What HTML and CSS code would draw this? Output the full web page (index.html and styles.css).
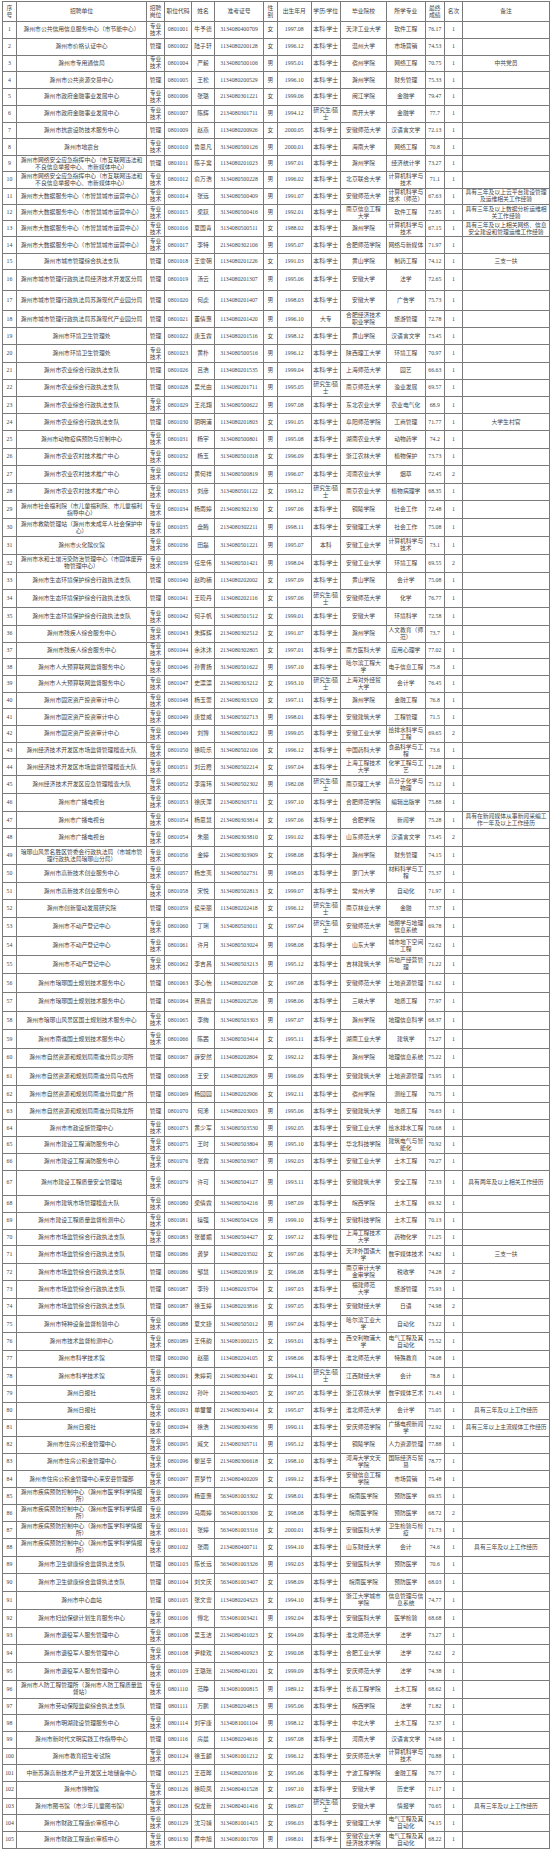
FILE: index.html
```html
<!DOCTYPE html>
<html lang="zh-CN">
<head>
<meta charset="utf-8">
<title>滁州市事业单位招聘拟聘用人员名单</title>
<link rel="stylesheet" href="styles.css">
</head>
<body>
<table class="sheet">
<colgroup>
<col class="c-no"><col class="c-unit"><col class="c-post"><col class="c-code"><col class="c-name"><col class="c-ticket"><col class="c-sex"><col class="c-birth"><col class="c-edu"><col class="c-school"><col class="c-major"><col class="c-score"><col class="c-rank"><col class="c-note">
</colgroup>
<thead>
<tr><th>序号</th><th>招聘单位</th><th>招聘岗位</th><th>职位代码</th><th>姓名</th><th>准考证号</th><th>性别</th><th>出生年月</th><th>学历/学位</th><th>毕业院校</th><th>所学专业</th><th>最终成绩</th><th>名次</th><th>备注</th></tr>
</thead>
<tbody class="g1">
<tr><td>1</td><td>滁州市公共信用信息服务中心（市节能中心）</td><td>专业技术</td><td>0801001</td><td>牛予德</td><td>3134080400709</td><td>女</td><td>1997.08</td><td>本科/学士</td><td>天津工业大学</td><td>软件工程</td><td>76.17</td><td>1</td><td></td></tr>
<tr><td>2</td><td>滁州市价格认证中心</td><td>管理</td><td>0801002</td><td>陆子轩</td><td>1134080200128</td><td>女</td><td>1996.12</td><td>本科/学士</td><td>温州大学</td><td>市场营销</td><td>74.53</td><td>1</td><td></td></tr>
<tr><td>3</td><td>滁州市专用通信局</td><td>专业技术</td><td>0801004</td><td>严毅</td><td>3134080500106</td><td>男</td><td>1995.01</td><td>本科/学士</td><td>宿州学院</td><td>网络工程</td><td>70.75</td><td>1</td><td>中共党员</td></tr>
<tr><td>4</td><td>滁州市公共资源交易中心</td><td>管理</td><td>0801005</td><td>王松</td><td>1134080200529</td><td>男</td><td>1996.10</td><td>本科/学士</td><td>滁州学院</td><td>财务管理</td><td>75.33</td><td>1</td><td></td></tr>
<tr><td>5</td><td>滁州市政府金融事业发展中心</td><td>专业技术</td><td>0801006</td><td>张璐</td><td>2134080301221</td><td>女</td><td>1999.06</td><td>本科/学士</td><td>闽江学院</td><td>金融学</td><td>79.47</td><td>1</td><td></td></tr>
<tr><td>6</td><td>滁州市政府金融事业发展中心</td><td>专业技术</td><td>0801007</td><td>陈辉</td><td>2134080301711</td><td>男</td><td>1994.12</td><td>研究生/硕士</td><td>南开大学</td><td>金融学</td><td>77.7</td><td>1</td><td></td></tr>
<tr><td>7</td><td>滁州市抗震设防技术服务中心</td><td>管理</td><td>0801009</td><td>赵燕</td><td>1134080200926</td><td>女</td><td>2000.05</td><td>本科/学士</td><td>安徽师范大学</td><td>汉语言文学</td><td>72.13</td><td>1</td><td></td></tr>
<tr><td>8</td><td>滁州市地震台</td><td>专业技术</td><td>0801010</td><td>鲁思凡</td><td>3134080500126</td><td>男</td><td>2000.01</td><td>本科/学士</td><td>海南大学</td><td>网络工程</td><td>70.8</td><td>1</td><td></td></tr>
</tbody>
<tbody class="g2">
<tr><td>9</td><td>滁州市网络安全应急指挥中心（市互联网违法和不良信息举报中心、市新媒体中心）</td><td>管理</td><td>0801011</td><td>陈子寓</td><td>1134080201023</td><td>男</td><td>1997.01</td><td>本科/学士</td><td>滁州学院</td><td>经济统计学</td><td>73.27</td><td>1</td><td></td></tr>
<tr><td>10</td><td>滁州市网络安全应急指挥中心（市互联网违法和不良信息举报中心、市新媒体中心）</td><td>专业技术</td><td>0801012</td><td>俞万浩</td><td>3134080500228</td><td>男</td><td>1996.02</td><td>本科/学士</td><td>北京联合大学</td><td>计算机科学与技术</td><td>71.1</td><td>1</td><td></td></tr>
<tr><td>11</td><td>滁州市大数据服务中心（市智慧城市运营中心）</td><td>专业技术</td><td>0801014</td><td>张远</td><td>3134080500409</td><td>男</td><td>1991.07</td><td>本科/学士</td><td>安徽师范大学</td><td>计算机科学与技术（师范）</td><td>67.63</td><td>1</td><td>具有三年及以上云平台建设管理及运维相关工作经验</td></tr>
<tr><td>12</td><td>滁州市大数据服务中心（市智慧城市运营中心）</td><td>专业技术</td><td>0801015</td><td>梁跃</td><td>3134080500416</td><td>男</td><td>1992.01</td><td>本科/学士</td><td>南京信息工程大学</td><td>软件工程</td><td>72.85</td><td>1</td><td>具有三年及以上数据分析运维相关工作经验</td></tr>
<tr><td>13</td><td>滁州市大数据服务中心（市智慧城市运营中心）</td><td>专业技术</td><td>0801016</td><td>夏国青</td><td>3134080500511</td><td>女</td><td>1988.02</td><td>本科/学士</td><td>滁州学院</td><td>计算机科学与技术</td><td>67.15</td><td>1</td><td>具有三年及以上相关网络、信息安全建设和管理运维工作经验</td></tr>
<tr><td>14</td><td>滁州市大数据服务中心（市智慧城市运营中心）</td><td>专业技术</td><td>0801017</td><td>李特</td><td>2134080302106</td><td>男</td><td>1995.07</td><td>本科/学士</td><td>合肥师范学院</td><td>网络与新媒体</td><td>71.97</td><td>1</td><td></td></tr>
<tr><td>15</td><td>滁州市城市管理综合执法支队</td><td>管理</td><td>0801018</td><td>王雯朝</td><td>1134080201226</td><td>女</td><td>1991.03</td><td>本科/学士</td><td>黄山学院</td><td>制药工程</td><td>74.12</td><td>1</td><td>三支一扶</td></tr>
<tr class="tall"><td>16</td><td>滁州市城市管理行政执法局经济技术开发区分局</td><td>管理</td><td>0801019</td><td>汤云</td><td>1134080201307</td><td>男</td><td>1995.06</td><td>本科/学士</td><td>安徽大学</td><td>法学</td><td>72.65</td><td>1</td><td></td></tr>
<tr class="tall"><td>17</td><td>滁州市城市管理行政执法局苏滁现代产业园分局</td><td>管理</td><td>0801020</td><td>何虎</td><td>1134080201407</td><td>男</td><td>1998.03</td><td>本科/学士</td><td>安徽大学</td><td>广告学</td><td>75.73</td><td>1</td><td></td></tr>
</tbody>
<tbody class="g3">
<tr><td>18</td><td>滁州市城市管理行政执法局苏滁现代产业园分局</td><td>管理</td><td>0801021</td><td>董倩惠</td><td>1134080201420</td><td>男</td><td>1996.10</td><td>大专</td><td>合肥经济技术职业学院</td><td>旅游管理</td><td>72.78</td><td>1</td><td></td></tr>
<tr><td>19</td><td>滁州市环境卫生管理处</td><td>管理</td><td>0801022</td><td>唐玉霖</td><td>1134080201516</td><td>女</td><td>1998.12</td><td>本科/学士</td><td>黄山学院</td><td>汉语言文学</td><td>73.45</td><td>1</td><td></td></tr>
<tr><td>20</td><td>滁州市环境卫生管理处</td><td>专业技术</td><td>0801023</td><td>黄朴</td><td>3134080500516</td><td>男</td><td>1996.12</td><td>本科/学士</td><td>陕西理工大学</td><td>环境工程</td><td>70.97</td><td>1</td><td></td></tr>
<tr><td>21</td><td>滁州市农业综合行政执法支队</td><td>管理</td><td>0801026</td><td>吕浩</td><td>1134080201535</td><td>男</td><td>1999.04</td><td>本科/学士</td><td>上海师范大学</td><td>园艺</td><td>66.63</td><td>1</td><td></td></tr>
<tr><td>22</td><td>滁州市农业综合行政执法支队</td><td>管理</td><td>0801028</td><td>吴光由</td><td>1134080201711</td><td>男</td><td>1995.05</td><td>研究生/硕士</td><td>南京师范大学</td><td>渔业发展</td><td>69.57</td><td>1</td><td></td></tr>
<tr><td>23</td><td>滁州市农业综合行政执法支队</td><td>专业技术</td><td>0801029</td><td>王兆翔</td><td>3134080500622</td><td>男</td><td>1997.08</td><td>本科/学士</td><td>东北农业大学</td><td>农业电气化</td><td>68.9</td><td>1</td><td></td></tr>
<tr><td>24</td><td>滁州市农业综合行政执法支队</td><td>管理</td><td>0801030</td><td>阴明浦</td><td>1134080201803</td><td>女</td><td>1991.05</td><td>本科/学士</td><td>阜阳师范学院</td><td>工商管理</td><td>71.77</td><td>1</td><td>大学生村官</td></tr>
<tr><td>25</td><td>滁州市动物疫病预防与控制中心</td><td>专业技术</td><td>0801031</td><td>杨宇</td><td>3134080500801</td><td>男</td><td>1995.08</td><td>本科/学士</td><td>湖南农业大学</td><td>动物药学</td><td>74.2</td><td>1</td><td></td></tr>
<tr><td>26</td><td>滁州市农业农村技术推广中心</td><td>专业技术</td><td>0801032</td><td>杨玉</td><td>3134080501018</td><td>女</td><td>1996.09</td><td>本科/学士</td><td>浙江农林大学</td><td>植物保护</td><td>73.73</td><td>1</td><td></td></tr>
</tbody>
<tbody class="g4">
<tr><td>27</td><td>滁州市农业农村技术推广中心</td><td>专业技术</td><td>0801032</td><td>黄何祥</td><td>3134080500819</td><td>男</td><td>1996.07</td><td>本科/学士</td><td>河南农业大学</td><td>烟草</td><td>72.45</td><td>2</td><td></td></tr>
<tr><td>28</td><td>滁州市农业农村技术推广中心</td><td>专业技术</td><td>0801033</td><td>刘彦</td><td>3134080501122</td><td>女</td><td>1993.12</td><td>研究生/硕士</td><td>南京农业大学</td><td>植物病理学</td><td>68.35</td><td>1</td><td></td></tr>
<tr><td>29</td><td>滁州市社会福利院（市儿童福利院、市儿童福利指导中心）</td><td>专业技术</td><td>0801034</td><td>杨雨婷</td><td>2134080302130</td><td>女</td><td>1997.06</td><td>本科/学士</td><td>铜陵学院</td><td>社会工作</td><td>72.48</td><td>1</td><td></td></tr>
<tr><td>30</td><td>滁州市救助管理站（滁州市未成年人社会保护中心）</td><td>专业技术</td><td>0801035</td><td>盘腾</td><td>2134080302211</td><td>男</td><td>1998.11</td><td>本科/学士</td><td>安徽理工大学</td><td>社会工作</td><td>75.08</td><td>1</td><td></td></tr>
<tr><td>31</td><td>滁州市火化殡仪馆</td><td>专业技术</td><td>0801036</td><td>田磊</td><td>3134080501221</td><td>男</td><td>1995.07</td><td>本科</td><td>安徽工业大学</td><td>计算机科学与技术</td><td>73.1</td><td>1</td><td></td></tr>
<tr><td>32</td><td>滁州市水和土壤污染防治管理中心（市固体废弃物管理中心）</td><td>专业技术</td><td>0801039</td><td>任忠伟</td><td>3134080501421</td><td>男</td><td>1998.04</td><td>本科/学士</td><td>安徽工业大学</td><td>环境工程</td><td>69.55</td><td>2</td><td></td></tr>
<tr><td>33</td><td>滁州市生态环境保护综合行政执法支队</td><td>管理</td><td>0801040</td><td>赵昀楠</td><td>1134080202002</td><td>女</td><td>1997.09</td><td>本科/学士</td><td>黄山学院</td><td>会计学</td><td>75.08</td><td>1</td><td></td></tr>
<tr><td>34</td><td>滁州市生态环境保护综合行政执法支队</td><td>管理</td><td>0801041</td><td>王晓丹</td><td>1134080202116</td><td>女</td><td>1997.06</td><td>研究生/硕士</td><td>安徽师范大学</td><td>化学</td><td>76.77</td><td>1</td><td></td></tr>
<tr><td>35</td><td>滁州市生态环境保护综合行政执法支队</td><td>专业技术</td><td>0801042</td><td>何子帆</td><td>3134080501512</td><td>女</td><td>1999.01</td><td>本科/学士</td><td>安徽大学</td><td>环境科学</td><td>72.58</td><td>1</td><td></td></tr>
</tbody>
<tbody class="g5">
<tr><td>36</td><td>滁州市残疾人综合服务中心</td><td>专业技术</td><td>0801043</td><td>朱辉辉</td><td>2134080302512</td><td>女</td><td>1991.07</td><td>本科/学士</td><td>滁州学院</td><td>人文教育（师范）</td><td>73.7</td><td>1</td><td></td></tr>
<tr><td>37</td><td>滁州市残疾人综合服务中心</td><td>专业技术</td><td>0801044</td><td>余沐沐</td><td>2134080302805</td><td>女</td><td>1997.01</td><td>本科/学士</td><td>南方医科大学</td><td>应用心理学</td><td>77.02</td><td>1</td><td></td></tr>
<tr><td>38</td><td>滁州市人大预算联网监督服务中心</td><td>专业技术</td><td>0801046</td><td>孙曹扬</td><td>3134080501622</td><td>男</td><td>1997.10</td><td>本科/学士</td><td>哈尔滨工程大学</td><td>电子信息工程</td><td>75.8</td><td>1</td><td></td></tr>
<tr><td>39</td><td>滁州市人大预算联网监督服务中心</td><td>专业技术</td><td>0801047</td><td>史漂漂</td><td>2134080303212</td><td>女</td><td>1993.10</td><td>研究生/硕士</td><td>上海对外经贸大学</td><td>会计学</td><td>76.45</td><td>1</td><td></td></tr>
<tr><td>40</td><td>滁州市固定资产投资审计中心</td><td>专业技术</td><td>0801048</td><td>杨玉蕾</td><td>2134080303320</td><td>女</td><td>1997.11</td><td>本科/学士</td><td>滁州学院</td><td>金融工程</td><td>76.8</td><td>1</td><td></td></tr>
<tr><td>41</td><td>滁州市固定资产投资审计中心</td><td>专业技术</td><td>0801049</td><td>唐世威</td><td>3134080502713</td><td>男</td><td>1998.01</td><td>本科/学士</td><td>安徽建筑大学</td><td>工程管理</td><td>71.5</td><td>1</td><td></td></tr>
<tr><td>42</td><td>滁州市固定资产投资审计中心</td><td>专业技术</td><td>0801049</td><td>刘博</td><td>3134080501822</td><td>男</td><td>1999.05</td><td>本科/学士</td><td>安徽工业大学</td><td>给排水科学与工程</td><td>69.65</td><td>2</td><td></td></tr>
<tr><td>43</td><td>滁州经济技术开发区市场监督管理稽查大队</td><td>专业技术</td><td>0801050</td><td>徐晓乐</td><td>3134080502106</td><td>女</td><td>1996.12</td><td>本科/学士</td><td>中国药科大学</td><td>食品科学与工程</td><td>73.6</td><td>1</td><td></td></tr>
<tr><td>44</td><td>滁州经济技术开发区市场监督管理稽查大队</td><td>专业技术</td><td>0801051</td><td>刘云霞</td><td>3134080502214</td><td>女</td><td>1997.04</td><td>本科/学士</td><td>上海工程技术大学</td><td>化学工程与工艺</td><td>71.28</td><td>1</td><td></td></tr>
</tbody>
<tbody class="g6">
<tr><td>45</td><td>滁州经济技术开发区应急管理稽查大队</td><td>专业技术</td><td>0801052</td><td>李露玮</td><td>3134080502302</td><td>男</td><td>1982.08</td><td>研究生/硕士</td><td>南京理工大学</td><td>高分子化学与物理</td><td>75.12</td><td>1</td><td></td></tr>
<tr><td>46</td><td>滁州市广播电视台</td><td>专业技术</td><td>0801053</td><td>徐庆萍</td><td>2134080303711</td><td>女</td><td>1997.10</td><td>本科/学士</td><td>合肥师范学院</td><td>编辑出版学</td><td>75.88</td><td>1</td><td></td></tr>
<tr><td>47</td><td>滁州市广播电视台</td><td>专业技术</td><td>0801054</td><td>杨思慧</td><td>2134080303814</td><td>女</td><td>1997.06</td><td>本科/学士</td><td>合肥学院</td><td>新闻学</td><td>75.28</td><td>1</td><td>具有在新闻媒体从事新闻采编工作一年及以上工作经历</td></tr>
<tr><td>48</td><td>滁州市广播电视台</td><td>专业技术</td><td>0801054</td><td>朱丽</td><td>2134080303810</td><td>女</td><td>1991.02</td><td>本科/学士</td><td>山东师范大学</td><td>汉语言文学</td><td>73.45</td><td>2</td><td></td></tr>
<tr><td>49</td><td>琅琊山风景名胜区管委会行政执法局（市城市管理行政执法局琅琊山分局）</td><td>专业技术</td><td>0801056</td><td>金婷</td><td>2134080303909</td><td>女</td><td>1998.08</td><td>本科/学士</td><td>滁州学院</td><td>财务管理</td><td>74.15</td><td>1</td><td></td></tr>
<tr><td>50</td><td>滁州市高新技术创业服务中心</td><td>专业技术</td><td>0801057</td><td>杨志夷</td><td>3134080502731</td><td>男</td><td>1998.03</td><td>本科/学士</td><td>厦门大学</td><td>材料科学与工程</td><td>75.37</td><td>1</td><td></td></tr>
<tr><td>51</td><td>滁州市高新技术创业服务中心</td><td>专业技术</td><td>0801058</td><td>宋悦</td><td>3134080502813</td><td>女</td><td>1999.07</td><td>本科/学士</td><td>常州大学</td><td>自动化</td><td>71.97</td><td>1</td><td></td></tr>
<tr><td>52</td><td>滁州市创新驱动发展研究院</td><td>管理</td><td>0801059</td><td>侯荣丽</td><td>1134080202418</td><td>女</td><td>1996.12</td><td>研究生/硕士</td><td>南京林业大学</td><td>金融</td><td>77.37</td><td>1</td><td></td></tr>
</tbody>
<tbody class="g7">
<tr><td>53</td><td>滁州市不动产登记中心</td><td>专业技术</td><td>0801060</td><td>丁琍</td><td>3134080503011</td><td>女</td><td>1997.04</td><td>研究生/硕士</td><td>安徽师范大学</td><td>地图学与地理信息系统</td><td>69.78</td><td>1</td><td></td></tr>
<tr><td>54</td><td>滁州市不动产登记中心</td><td>专业技术</td><td>0801061</td><td>许月</td><td>3134080503024</td><td>男</td><td>1998.08</td><td>本科/学士</td><td>山东大学</td><td>城市地下空间工程</td><td>72.62</td><td>1</td><td></td></tr>
<tr><td>55</td><td>滁州市不动产登记中心</td><td>专业技术</td><td>0801062</td><td>李吉昌</td><td>3134080503213</td><td>男</td><td>1995.12</td><td>本科/学士</td><td>吉林建筑大学</td><td>房地产经营管理</td><td>71.22</td><td>1</td><td></td></tr>
<tr><td>56</td><td>滁州市琅琊国土规划技术服务中心</td><td>管理</td><td>0801063</td><td>李心怡</td><td>1134080202508</td><td>女</td><td>1997.08</td><td>本科/学士</td><td>安徽师范大学</td><td>土地资源管理</td><td>71.62</td><td>1</td><td></td></tr>
<tr><td>57</td><td>滁州市琅琊国土规划技术服务中心</td><td>管理</td><td>0801064</td><td>贺昌雷</td><td>1134080202526</td><td>男</td><td>1998.06</td><td>本科/学士</td><td>三峡大学</td><td>地质工程</td><td>77.97</td><td>1</td><td></td></tr>
<tr><td>58</td><td>滁州市琅琊山风景区国土规划技术服务中心</td><td>专业技术</td><td>0801065</td><td>李絢</td><td>3134080503303</td><td>男</td><td>1997.07</td><td>本科/学士</td><td>滁州学院</td><td>地理信息科学</td><td>68.37</td><td>1</td><td></td></tr>
<tr><td>59</td><td>滁州市南谯国土规划技术服务中心</td><td>专业技术</td><td>0801066</td><td>陈茜</td><td>3134080503414</td><td>女</td><td>1995.11</td><td>本科/学士</td><td>湖南工业大学</td><td>建筑学</td><td>73.27</td><td>1</td><td></td></tr>
<tr><td>60</td><td>滁州市自然资源和规划局南谯分局沙河所</td><td>管理</td><td>0801067</td><td>薛安然</td><td>1134080202804</td><td>女</td><td>1992.12</td><td>本科/学士</td><td>滁州学院</td><td>地理信息系统</td><td>75.22</td><td>1</td><td></td></tr>
<tr><td>61</td><td>滁州市自然资源和规划局南谯分局乌衣所</td><td>管理</td><td>0801068</td><td>王安</td><td>1134080202809</td><td>男</td><td>1996.09</td><td>本科/学士</td><td>安徽建筑大学</td><td>土地资源管理</td><td>73.95</td><td>1</td><td></td></tr>
</tbody>
<tbody class="g8">
<tr><td>62</td><td>滁州市自然资源和规划局南谯分局章广所</td><td>管理</td><td>0801069</td><td>杨园园</td><td>1134080202906</td><td>女</td><td>1992.11</td><td>本科/学士</td><td>宿州学院</td><td>测绘工程</td><td>70.75</td><td>1</td><td></td></tr>
<tr><td>63</td><td>滁州市自然资源和规划局南谯分局珠龙所</td><td>管理</td><td>0801070</td><td>何浠</td><td>1134080203003</td><td>男</td><td>1995.06</td><td>本科/学士</td><td>安徽建筑大学</td><td>地质工程</td><td>76.63</td><td>1</td><td></td></tr>
<tr><td>64</td><td>滁州市市政设施管理中心</td><td>专业技术</td><td>0801073</td><td>黄少军</td><td>3134080503530</td><td>男</td><td>1992.05</td><td>本科/学士</td><td>安徽工业大学</td><td>给水排水工程</td><td>70.68</td><td>1</td><td></td></tr>
<tr><td>65</td><td>滁州市建设工程消防服务中心</td><td>专业技术</td><td>0801075</td><td>王时</td><td>3134080503804</td><td>男</td><td>1995.10</td><td>本科/学士</td><td>华北科技学院</td><td>建筑电气与智能化</td><td>70.92</td><td>1</td><td></td></tr>
<tr><td>66</td><td>滁州市建设工程消防服务中心</td><td>专业技术</td><td>0801076</td><td>张霖</td><td>3134080503907</td><td>男</td><td>1992.03</td><td>本科/学士</td><td>安徽工业大学</td><td>土木工程</td><td>70.27</td><td>1</td><td></td></tr>
<tr class="taller"><td>67</td><td>滁州市建设工程质量安全管理站</td><td>专业技术</td><td>0801079</td><td>许可</td><td>3134080504127</td><td>男</td><td>1993.11</td><td>本科/学士</td><td>安徽建筑大学</td><td>安全工程</td><td>72.33</td><td>1</td><td>具有两年及以上相关工作经历</td></tr>
<tr><td>68</td><td>滁州市建筑市场管理稽查大队</td><td>专业技术</td><td>0801080</td><td>梁倩霖</td><td>3134080504216</td><td>男</td><td>1987.09</td><td>本科/学士</td><td>皖西学院</td><td>土木工程</td><td>69.32</td><td>1</td><td></td></tr>
<tr><td>69</td><td>滁州市建设工程质量监督检测中心</td><td>专业技术</td><td>0801081</td><td>操强</td><td>3134080504326</td><td>男</td><td>1999.10</td><td>本科/学士</td><td>安徽科技学院</td><td>土木工程</td><td>70.13</td><td>1</td><td></td></tr>
<tr><td>70</td><td>滁州市市场监管综合行政执法支队</td><td>专业技术</td><td>0801083</td><td>张馨媚</td><td>3134080504427</td><td>女</td><td>1997.12</td><td>本科/学位</td><td>上海工程技术大学</td><td>药物化学</td><td>71.25</td><td>1</td><td></td></tr>
</tbody>
<tbody class="g9">
<tr><td>71</td><td>滁州市市场监管综合行政执法支队</td><td>管理</td><td>0801086</td><td>龚梦</td><td>1134080203502</td><td>女</td><td>1997.06</td><td>本科/学士</td><td>天津外国语大学</td><td>数字媒体技术</td><td>74.82</td><td>1</td><td>三支一扶</td></tr>
<tr><td>72</td><td>滁州市市场监管综合行政执法支队</td><td>管理</td><td>0801086</td><td>邹慧</td><td>1134080203819</td><td>女</td><td>1996.08</td><td>本科/学士</td><td>南京审计大学金审学院</td><td>税收学</td><td>74.28</td><td>2</td><td></td></tr>
<tr><td>73</td><td>滁州市市场监管综合行政执法支队</td><td>管理</td><td>0801087</td><td>李玲</td><td>1134080203704</td><td>女</td><td>1997.03</td><td>本科/学士</td><td>福建师范<br>大学</td><td>旅游管理</td><td>75.93</td><td>1</td><td></td></tr>
<tr><td>74</td><td>滁州市市场监管综合行政执法支队</td><td>管理</td><td>0801087</td><td>徐玉婷</td><td>1134080203816</td><td>女</td><td>1997.05</td><td>本科/学士</td><td>安徽财经大学</td><td>日语</td><td>74.98</td><td>2</td><td></td></tr>
<tr><td>75</td><td>滁州市特种设备监督检验中心</td><td>专业技术</td><td>0801088</td><td>夏文捷</td><td>3134080505012</td><td>男</td><td>1997.04</td><td>本科/学士</td><td>哈尔滨工业大学</td><td>自动化</td><td>73.22</td><td>1</td><td></td></tr>
<tr><td>76</td><td>滁州市技术监督检测中心</td><td>专业技术</td><td>0801089</td><td>王伟韵</td><td>3134081000215</td><td>女</td><td>1993.01</td><td>本科/学士</td><td>西交利物浦大学</td><td>电气工程及其自动化</td><td>75.52</td><td>1</td><td></td></tr>
<tr><td>77</td><td>滁州市科学技术馆</td><td>管理</td><td>0801090</td><td>赵丽</td><td>1134080204105</td><td>女</td><td>1998.06</td><td>本科/学士</td><td>淮北师范大学</td><td>特殊教育</td><td>74.08</td><td>1</td><td></td></tr>
<tr><td>78</td><td>滁州市科学技术馆</td><td>专业技术</td><td>0801091</td><td>朱婷莉</td><td>2134080304401</td><td>女</td><td>1994.11</td><td>研究生/硕士</td><td>江西财经大学</td><td>会计</td><td>78.8</td><td>1</td><td></td></tr>
</tbody>
<tbody class="g10">
<tr><td>79</td><td>滁州日报社</td><td>专业技术</td><td>0801092</td><td>孙叶</td><td>2134080304605</td><td>女</td><td>1997.05</td><td>本科/学士</td><td>浙江农林大学</td><td>数字媒体艺术</td><td>71.43</td><td>1</td><td></td></tr>
<tr><td>80</td><td>滁州日报社</td><td>专业技术</td><td>0801093</td><td>单璽璽</td><td>2134080304914</td><td>女</td><td>1995.07</td><td>本科/学士</td><td>淮北师范大学</td><td>会计学</td><td>75.05</td><td>1</td><td>具有三年及以上工作经历</td></tr>
<tr><td>81</td><td>滁州日报社</td><td>专业技术</td><td>0801094</td><td>徐浩</td><td>2134080304936</td><td>男</td><td>1990.11</td><td>本科/学士</td><td>安庆师范学院</td><td>广播电视新闻学</td><td>72.92</td><td>1</td><td>具有三年以上主流媒体工作经历</td></tr>
<tr><td>82</td><td>滁州市住房公积金管理中心</td><td>专业技术</td><td>0801095</td><td>臧文</td><td>2134080305711</td><td>男</td><td>1995.12</td><td>本科/学士</td><td>铜陵学院</td><td>人力资源管理</td><td>77.88</td><td>1</td><td></td></tr>
<tr><td>83</td><td>滁州市住房公积金管理中心</td><td>专业技术</td><td>0801096</td><td>黎昱辛</td><td>2134080306618</td><td>女</td><td>1998.10</td><td>本科/学士</td><td>河海大学文天学院</td><td>国际经济与贸易</td><td>78.77</td><td>1</td><td></td></tr>
<tr><td>84</td><td>滁州市住房公积金管理中心来安县管理部</td><td>专业技术</td><td>0801097</td><td>贾梦竹</td><td>2134080400209</td><td>女</td><td>1999.12</td><td>本科/学士</td><td>安徽信息工程学院</td><td>市场营销</td><td>75.48</td><td>1</td><td></td></tr>
<tr><td>85</td><td>滁州市疾病预防控制中心（滁州市医学科学情报所）</td><td>专业技术</td><td>0801099</td><td>杨亚惠</td><td>5634081003302</td><td>女</td><td>1998.01</td><td>本科/学士</td><td>皖南医学院</td><td>预防医学</td><td>69.35</td><td>1</td><td></td></tr>
<tr><td>86</td><td>滁州市疾病预防控制中心（滁州市医学科学情报所）</td><td>专业技术</td><td>0801099</td><td>马雨婷</td><td>5634081003306</td><td>女</td><td>1998.08</td><td>本科/学士</td><td>皖南医学院</td><td>预防医学</td><td>68.72</td><td>2</td><td></td></tr>
<tr><td>87</td><td>滁州市疾病预防控制中心（滁州市医学科学情报所）</td><td>专业技术</td><td>0801101</td><td>张婷</td><td>5634081003316</td><td>女</td><td>2000.01</td><td>本科/学士</td><td>安徽医科大学</td><td>卫生检验与检疫</td><td>71.73</td><td>1</td><td></td></tr>
<tr><td>88</td><td>滁州市疾病预防控制中心（滁州市医学科学情报所）</td><td>专业技术</td><td>0801102</td><td>张雨</td><td>2134080400711</td><td>女</td><td>1994.10</td><td>本科/学士</td><td>山东财经大学</td><td>会计</td><td>74.6</td><td>1</td><td>具有三年及以上工作经历</td></tr>
</tbody>
<tbody class="g11">
<tr><td>89</td><td>滁州市卫生健康综合监督执法支队</td><td>管理</td><td>0801103</td><td>陈长远</td><td>5634081003326</td><td>男</td><td>1992.03</td><td>本科/学士</td><td>安徽医科大学</td><td>预防医学</td><td>70.6</td><td>1</td><td></td></tr>
<tr><td>90</td><td>滁州市卫生健康综合监督执法支队</td><td>管理</td><td>0801104</td><td>刘文庆</td><td>5634081003407</td><td>女</td><td>1998.09</td><td>本科/学士</td><td>皖南医学院</td><td>预防医学</td><td>68.03</td><td>1</td><td></td></tr>
<tr><td>91</td><td>滁州市中心血站</td><td>管理</td><td>0801105</td><td>张文雷</td><td>1134080204323</td><td>女</td><td>1994.10</td><td>本科/学士</td><td>浙江大学城市学院</td><td>信息管理与信息系统</td><td>74.77</td><td>1</td><td></td></tr>
<tr><td>92</td><td>滁州市妇幼保健计划生育服务中心</td><td>专业技术</td><td>0801106</td><td>傅北</td><td>5534081003421</td><td>男</td><td>1992.04</td><td>本科/学士</td><td>安徽医科大学</td><td>医学检验</td><td>68.68</td><td>1</td><td></td></tr>
<tr><td>93</td><td>滁州市退役军人服务管理中心</td><td>专业技术</td><td>0801108</td><td>吴玉洁</td><td>2134080401023</td><td>女</td><td>1994.09</td><td>本科/学士</td><td>淮北师范大学</td><td>法学</td><td>73.27</td><td>1</td><td></td></tr>
<tr><td>94</td><td>滁州市退役军人服务管理中心</td><td>专业技术</td><td>0801108</td><td>尹棣欢</td><td>2134080400923</td><td>女</td><td>1990.08</td><td>本科/学士</td><td>合肥工业大学</td><td>法学</td><td>72.62</td><td>2</td><td></td></tr>
<tr><td>95</td><td>滁州市退役军人服务管理中心</td><td>专业技术</td><td>0801109</td><td>王璐瑶</td><td>2134080401201</td><td>女</td><td>1999.09</td><td>本科/学士</td><td>安庆师范大学</td><td>法学</td><td>74.38</td><td>1</td><td></td></tr>
<tr><td>96</td><td>滁州市人防工程管理所（滁州市人防工程质量监督站）</td><td>专业技术</td><td>0801110</td><td>范睁</td><td>3134081000815</td><td>男</td><td>1989.12</td><td>本科/学士</td><td>长春工程学院</td><td>土木工程</td><td>68.62</td><td>1</td><td></td></tr>
</tbody>
<tbody class="g12">
<tr><td>97</td><td>滁州市劳动保障监察综合执法支队</td><td>管理</td><td>0801111</td><td>万鹏</td><td>1134080204813</td><td>男</td><td>1995.06</td><td>本科/学士</td><td>皖西学院</td><td>法学</td><td>71.82</td><td>1</td><td></td></tr>
<tr><td>98</td><td>滁州市明湖建设管理服务中心</td><td>专业技术</td><td>0801114</td><td>刘宇康</td><td>3134081001104</td><td>男</td><td>1998.12</td><td>本科/学士</td><td>中北大学</td><td>土木工程</td><td>72.37</td><td>1</td><td></td></tr>
<tr><td>99</td><td>滁州市新时代文明实践工作指导中心</td><td>管理</td><td>0801116</td><td>房晨</td><td>1134080204616</td><td>女</td><td>1997.08</td><td>本科/学士</td><td>河南大学</td><td>汉语言文学</td><td>74.68</td><td>1</td><td></td></tr>
<tr><td>100</td><td>滁州市教育招生考试院</td><td>专业技术</td><td>0801124</td><td>徐玉麟</td><td>3134081001212</td><td>女</td><td>1996.12</td><td>本科/学士</td><td>安庆师范大学</td><td>计算机科学与技术</td><td>70.88</td><td>1</td><td></td></tr>
<tr><td>101</td><td>中新苏滁高新技术产业开发区土地储备中心</td><td>管理</td><td>0801125</td><td>王莅晔</td><td>1134080205016</td><td>女</td><td>1995.06</td><td>本科/学士</td><td>宁波工程学院</td><td>金融工程</td><td>76.77</td><td>1</td><td></td></tr>
<tr><td>102</td><td>滁州市博物馆</td><td>专业技术</td><td>0801126</td><td>徐晓凤</td><td>2134080401528</td><td>女</td><td>1997.10</td><td>本科/学士</td><td>安徽大学</td><td>历史学</td><td>71.17</td><td>1</td><td></td></tr>
<tr><td>103</td><td>滁州市图书馆（市少年儿童图书馆）</td><td>专业技术</td><td>0801128</td><td>倪龙新</td><td>2134080401416</td><td>女</td><td>1989.07</td><td>研究生/硕士</td><td>安徽大学</td><td>情报学</td><td>70.65</td><td>1</td><td>具有三年及以上工作经历</td></tr>
<tr><td>104</td><td>滁州市财政工程造价审核中心</td><td>专业技术</td><td>0801129</td><td>沈习靖</td><td>3134081001415</td><td>女</td><td>1996.03</td><td>本科/学士</td><td>安徽理工大学</td><td>电气工程及其自动化</td><td>74.15</td><td>1</td><td></td></tr>
<tr><td>105</td><td>滁州市财政工程造价审核中心</td><td>专业技术</td><td>0801130</td><td>黄中旭</td><td>3134081001709</td><td>男</td><td>1998.01</td><td>本科/学士</td><td>安徽农业大学经济技术学院</td><td>电气工程及其自动化</td><td>68.22</td><td>1</td><td></td></tr>
</tbody>
</table>
</body>
</html>
```
FILE: styles.css
```css
html, body {
  margin: 0;
  padding: 0;
  background: #ffffff;
}

body {
  width: 550px;
}

.sheet {
  border-collapse: collapse;
  table-layout: fixed;
  width: 547px;
  margin: 1px 0 0 2px;
  font-family: "Liberation Serif", "Noto Sans CJK SC", serif;
  font-size: 5.8px;
  line-height: 7px;
  color: #444444;
  text-spacing-trim: space-all;
}

.sheet th,
.sheet td {
  border: 1px solid #7a7a7a;
  padding: 0 1px;
  text-align: center;
  vertical-align: middle;
  font-weight: normal;
  overflow: hidden;
  word-break: break-all;
}

.sheet td:nth-child(2),
.sheet td:nth-child(14) {
  padding: 0 2px;
}

.sheet td:nth-child(10) {
  padding: 0 3px;
}

.c-no { width: 14px; }
.c-unit { width: 130px; }
.c-post { width: 18px; }
.c-code { width: 27px; }
.c-name { width: 23px; }
.c-ticket { width: 49px; }
.c-sex { width: 14px; }
.c-birth { width: 33.5px; }
.c-edu { width: 29.5px; }
.c-school { width: 46px; }
.c-major { width: 38.6px; }
.c-score { width: 19.4px; }
.c-rank { width: 18px; }
.c-note { width: 87px; }

.sheet thead tr { height: 20px; }
.g1 tr { height: 16.75px; }
.g2 tr { height: 16.3px; }
.g2 tr.tall { height: 20.5px; }
.g3 tr { height: 17.2px; }
.g4 tr { height: 17.8px; }
.g5 tr { height: 16.7px; }
.g6 tr { height: 17.75px; }
.g7 tr { height: 18.7px; }
.g8 tr { height: 16.9px; }
.g8 tr.taller { height: 25px; }
.g9 tr { height: 17.4px; }
.g10 tr { height: 17.1px; }
.g11 tr { height: 17.75px; }
.g12 tr { height: 16.7px; }
```
